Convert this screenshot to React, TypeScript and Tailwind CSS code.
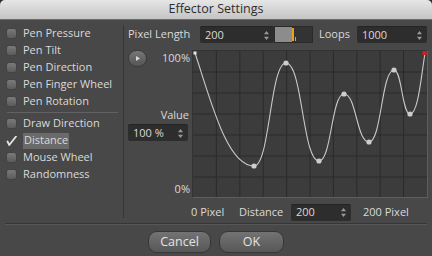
import React from 'react'

const leftOptions = ['Pen Pressure', 'Pen Tilt', 'Pen Direction', 'Pen Finger Wheel', 'Pen Rotation']
const lowerOptions = ['Draw Direction', 'Distance', 'Mouse Wheel', 'Randomness']

// knot points on the curve (graph local coords, 235 x 147)
const pts: [number, number][] = [
  [2, 2],
  [61, 115],
  [93, 12],
  [126, 110],
  [151, 43],
  [176, 91],
  [201, 19],
  [217, 63],
  [232, 2],
]

function curvePath() {
  let d = `M ${pts[0][0]} ${pts[0][1]} C 18 50, 34 115, ${pts[1][0]} ${pts[1][1]}`
  for (let i = 1; i < pts.length - 2; i++) {
    const [x0, y0] = pts[i]
    const [x1, y1] = pts[i + 1]
    const dx = (x1 - x0) / 2
    d += ` C ${x0 + dx} ${y0}, ${x1 - dx} ${y1}, ${x1} ${y1}`
  }
  const [xa, ya] = pts[pts.length - 2]
  const [xb, yb] = pts[pts.length - 1]
  d += ` C ${xa + 8} ${ya}, ${xb - 4} ${yb + 25}, ${xb} ${yb}`
  return d
}

function Checkbox() {
  return (
    <div className="w-[11px] h-[11px] rounded-[3px] bg-gradient-to-b from-[#7a7a7a] to-[#5c5c5c] border border-[#434343] shrink-0" />
  )
}

function Spinner() {
  return (
    <svg width="5" height="9" viewBox="0 0 5 9" className="shrink-0">
      <path d="M2.5 0 L5 3.2 L0 3.2 Z" fill="#9a9a9a" />
      <path d="M2.5 9 L5 5.8 L0 5.8 Z" fill="#9a9a9a" />
    </svg>
  )
}

function NumField({ value, className }: { value: string; className: string }) {
  return (
    <div className={`h-[17px] bg-[#2d2d2d] rounded-[2px] border-t border-[#242424] flex items-center justify-between pl-[5px] pr-[5px] ${className}`}>
      <span>{value}</span>
      <Spinner />
    </div>
  )
}

function Graph() {
  const cols = [1, 2, 3, 4, 5, 6, 7, 8, 9]
  const rows = [1, 2, 3, 4, 5, 6]
  return (
    <div className="w-[236px] h-[148px] bg-[#3c3c3c] border-b border-r border-[#5e5e5e] border-t border-l border-t-[#333] border-l-[#333]">
      <svg width="234" height="146" viewBox="0 0 234 146">
        {cols.map((c) => (
          <line key={c} x1={c * 23.4} y1="0" x2={c * 23.4} y2="146" stroke="#2b2b2b" strokeWidth="1" />
        ))}
        {rows.map((r) => (
          <line key={r} x1="0" y1={r * 21} x2="234" y2={r * 21} stroke="#2b2b2b" strokeWidth="1" />
        ))}
        <path d={curvePath()} fill="none" stroke="#c9c9c9" strokeWidth="1.1" />
        {pts.slice(1, -1).map(([x, y]) => (
          <circle key={x} cx={x} cy={y} r="2.6" fill="#cdcdcd" />
        ))}
        <rect x="0.5" y="0.5" width="3" height="3" fill="#e8e8e8" />
        <rect x="229.5" y="0" width="4" height="4" fill="#e01818" />
      </svg>
    </div>
  )
}

export default function App() {
  return (
    <div className="w-[432px] h-[256px] bg-[#2b2b2b] overflow-hidden font-['Open_Sans',sans-serif] text-[11px] text-[#dadada]">
      <div className="h-full rounded-t-[5px] bg-[#484848] flex flex-col overflow-hidden">
        {/* Title bar */}
        <div className="h-[20px] shrink-0 bg-gradient-to-b from-[#e6e6e6] to-[#c4c4c4] border-b border-[#6e6e6e] flex items-center justify-center text-[12.5px] text-[#2e2e2e]">
          Effector Settings
        </div>

        {/* Main */}
        <div className="h-[203px] flex">
          {/* Left list */}
          <div className="w-[123px] pt-[5px] pl-[6px] pr-[5px]">
            {leftOptions.map((o) => (
              <div key={o} className="h-[17px] flex items-center gap-[6px]">
                <Checkbox />
                <span>{o}</span>
              </div>
            ))}
            <div className="mt-[2px] mb-[2px] ml-px h-px bg-[#626262]" />
            {lowerOptions.map((o) =>
              o === 'Distance' ? (
                <div key={o} className="h-[17px] flex items-center gap-[6px]">
                  <svg width="11" height="10" viewBox="0 0 11 10" className="shrink-0">
                    <path d="M1.5 5.5 L3.3 9 L10 0.5" fill="none" stroke="#e4e4e4" strokeWidth="1.8" strokeLinecap="round" strokeLinejoin="round" />
                  </svg>
                  <span className="bg-[#6a6a6a] px-[1px] h-[16px] flex items-center">{o}</span>
                </div>
              ) : (
                <div key={o} className="h-[17px] flex items-center gap-[6px]">
                  <Checkbox />
                  <span>{o}</span>
                </div>
              )
            )}
          </div>

          <div className="w-px bg-[#353535] my-[5px]" />

          {/* Right side */}
          <div className="flex-1 pt-[6px] pl-[4px]">
            <div className="h-[17px] flex items-center">
              <span className="w-[72px]">Pixel Length</span>
              <NumField value="200" className="w-[74px]" />
              <div className="w-[39px] h-[17px] border border-[#2a2a2a] bg-[#333333] flex">
                <div className="w-[17px] bg-[#8c8c8c]" />
                <div className="w-[2px] bg-[#e9a21e] my-[1px]" />
                <div className="w-px bg-[#e9a21e] ml-[1px] mt-[10px] mb-[1px]" />
              </div>
              <span className="ml-[6px] w-[38px]">Loops</span>
              <NumField value="1000" className="w-[70px]" />
            </div>

            <div className="mt-[7px] flex">
              <div className="w-[64px] flex flex-col">
                <div className="h-[17px] flex items-center justify-between pr-[2px]">
                  <div className="w-[19px] h-[17px] rounded-full bg-gradient-to-b from-[#777] to-[#545454] border border-[#3a3a3a] flex items-center justify-center">
                    <svg width="4" height="5" viewBox="0 0 4 5">
                      <path d="M0 0 L4 2.5 L0 5 Z" fill="#d8d8d8" />
                    </svg>
                  </div>
                  <span>100%</span>
                </div>
                <div className="mt-[41px] h-[14px] flex items-center justify-end pr-[3px]">Value</div>
                <NumField value="100 %" className="mt-[2px] w-[60px]" />
                <div className="mt-[41px] h-[14px] flex items-center justify-end pr-[2px]">0%</div>
              </div>
              <Graph />
            </div>

            <div className="mt-[6px] h-[16px] flex items-center pl-[63px]">
              <span className="w-[48px]">0 Pixel</span>
              <span className="w-[52px]">Distance</span>
              <NumField value="200" className="w-[60px]" />
              <span className="ml-[12px]">200 Pixel</span>
            </div>
          </div>
        </div>

        <div className="mx-[5px] h-px bg-[#363636]" />
        <div className="mx-[5px] h-px bg-[#575757]" />

        {/* Buttons */}
        <div className="flex-1 flex justify-center gap-[8px] pt-[6px]">
          <button className="w-[63px] h-[22px] rounded-[9px] bg-gradient-to-b from-[#737373] to-[#575757] border border-[#363636] text-[12.5px] text-[#e4e4e4]">
            Cancel
          </button>
          <button className="w-[65px] h-[22px] rounded-[9px] bg-gradient-to-b from-[#737373] to-[#575757] border border-[#363636] text-[12.5px] text-[#e4e4e4]">
            OK
          </button>
        </div>
      </div>
    </div>
  )
}
